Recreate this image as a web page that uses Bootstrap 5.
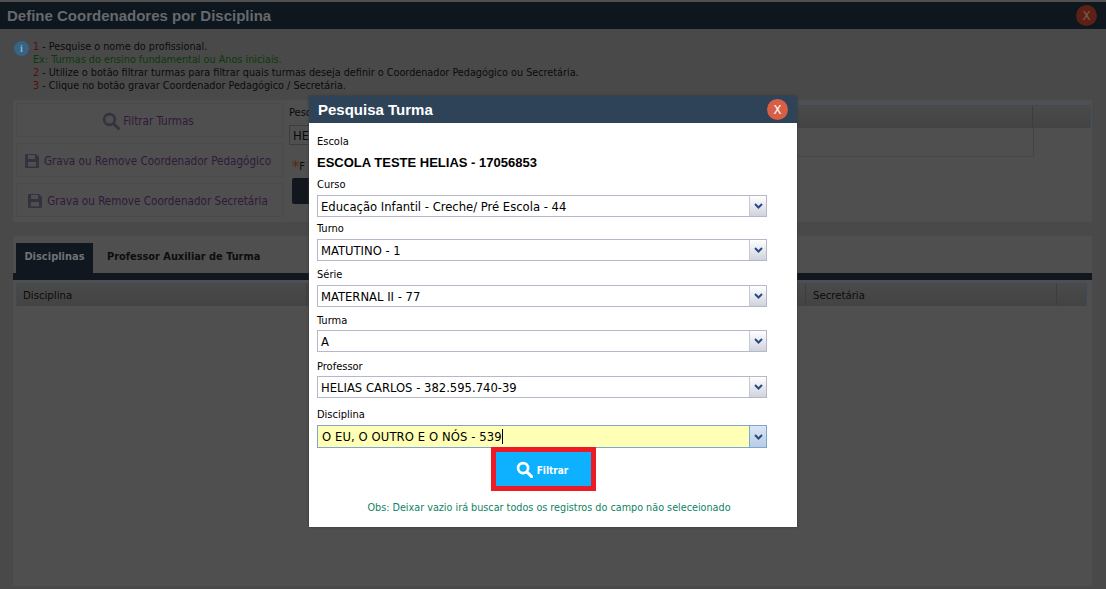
<!DOCTYPE html>
<html lang="pt-BR">
<head>
<meta charset="utf-8">
<title>Define Coordenadores por Disciplina</title>
<link href="https://cdn.jsdelivr.net/npm/bootstrap@5.3.0/dist/css/bootstrap.min.css" rel="stylesheet">
<style>
html,body{height:100%;overflow:hidden}
body{background:#494949;font-family:"DejaVu Sans",sans-serif;font-stretch:condensed;font-size:11px;color:#0b0b0b;position:relative}
.win-top{height:2px;background:#505050}
.win-title{height:27px;background:#0e171e;padding:0 7px;font:bold 15px/28px "Liberation Sans",sans-serif;color:#666a6e}
.close-dim,.close-live{width:21px;height:21px;border-radius:50%;font:13px/21px "DejaVu Sans",sans-serif;font-stretch:condensed;text-align:center}
.close-dim{background:#5c2015;color:#7d5f58;margin-right:2px}
.close-live{background:#d85f47;color:#fff}
.help-box{height:71px;padding:11px 0 0 14px}
.help-ico{width:15px;height:15px;border-radius:50%;background:#376384;color:#8fb0c6;font:bold 10px/15px "Liberation Serif",serif;text-align:center;margin:1px 4px 0 0;flex:none}
.help-text{line-height:13px;font-size:10.75px}
.tx-red{color:#5a0c0c}.tx-green{color:#0c3a0c}
.panel-a,.panel-b{margin:0 14px 0 13px;background:#4f4f4f}
.panel-a{height:122px;padding:3px 1px 3px 3px}
.panel-b{margin-top:14px;height:350px;padding-top:7px}
.act-col{width:267px;flex:none}
.act-btn{height:34px;border:1px solid #4a4a4a;color:#2f1a3a;font-size:11.6px;line-height:16px;padding:1px 3px 0 0;white-space:nowrap;margin-bottom:6px}
.act-btn svg{flex:none;margin-right:5px}
.act-btn .lens-ico{margin-right:3px}
.right-col{width:100px;flex:none;padding:2px 0 0 6px}
.peek-label{line-height:16px}
.peek-input{height:20px;border:1px solid #3d3d3d;padding-left:3px;font-size:13px;line-height:19px;margin-top:4px}
.peek-star{color:#0b0b0b;font-size:11px;line-height:18px;margin:13px 0 0 3px}
.peek-star b{color:#5e270e;font-size:16px;font-weight:normal;vertical-align:-2px}
.peek-btn{height:26px;background:#12171d;border-radius:2px;margin:2px 0 0 3px}
.grid-wrap{flex:1;min-width:0;padding-top:2px}
.grid-head{height:23px;border:1px solid #3c4a59;border-bottom:0;background:linear-gradient(#4a4a4a,#434343)}
.grid-rest{height:29px;margin-right:57px;border-right:1px solid #444;border-bottom:1px solid #484848}
.tab-row{height:30px}
.tab-on{width:77px;margin-left:3px;background:#10171e;color:#6f7376;font-weight:bold;font-size:11px;padding-bottom:2px}
.tab-off{font-weight:bold;font-size:10.9px;margin-left:14px;color:#0d0d0d;padding-bottom:2px}
.tab-line{height:7px;background:#10171e}
.tbl-head{height:23px;margin:3px 5px 0 3px;border:1px solid #3c4a59;border-bottom:0;background:linear-gradient(#4a4a4a,#434343);line-height:23px;font-size:11.3px}
.th-a{width:290px;padding-left:6px;border-right:1px solid #3d3d3d}
.th-b{padding-left:7px;border-left:1px solid #3d3d3d;width:251px}
.th-c{width:30px;border-left:1px solid #3d3d3d}
.th-d{width:58px;border-left:1px solid #3d3d3d}
.pop{position:absolute;left:309px;top:96px;width:488px;height:431px;background:#fff;color:#000;box-shadow:0 0 2px #333}
.pop-head{height:27px;background:#2e4358;padding:0 9px 0 9px}
.pop-title{font:bold 15px/28px "Liberation Sans",sans-serif;color:#fff}
.pop-body{padding:7px 30px 0 8px}
.fld-label{display:block;height:22px;line-height:24px;margin:0;font-size:11px}
.school{font:bold 13px/22px "Liberation Sans",sans-serif;height:20px}
.combo{height:22px;border:1px solid #b5b8c8;font-size:12.9px;line-height:21px}
.combo-val{padding-left:3px;white-space:nowrap}
.combo-btn{width:17px;flex:none;border-left:1px solid #c5c8d8;background:linear-gradient(#fff,#cfd3dc)}
.g2{margin-top:2px}.g2b{margin-top:2px;line-height:26px}.g1{margin-top:1px}.g1b{margin-top:1px;line-height:26px}.g5{margin-top:5px}
.combo-on{height:23px;border-color:#7ea6d4;background:#ffffb5}
.combo-on .combo-val{padding-left:4px;letter-spacing:.1px}
.combo-on .combo-btn{background:linear-gradient(#dbe6f3,#b8cde6);border-left-color:#7ea6d4}
.caret-mark{display:inline-block;width:1px;height:15px;background:#000;vertical-align:-3px}
.filter-frame{width:105px;height:44px;margin:-1px 0 0 174px;border:5px solid #ed1c24;background:#0db1ff}
.filter-btn{height:100%;width:100%;background:#0db1ff;color:#fff;font-weight:bold;font-size:10px;font-stretch:condensed;border:0;border-radius:0;padding:0 3px 0 0}
.filter-btn svg{margin-right:4px}
.filter-btn span{padding-top:2px}
.obs{color:#0f8264;text-align:center;font-size:10.72px;margin-top:9px;line-height:16px;padding-left:14px;white-space:nowrap}
</style>
</head>
<body>
<div class="win-top"></div>
<div class="win-title d-flex justify-content-between align-items-center">
  <span>Define Coordenadores por Disciplina</span>
  <div class="close-dim">X</div>
</div>
<div class="help-box d-flex align-items-start">
  <div class="help-ico">i</div>
  <div class="help-text">
    <div><span class="tx-red">1</span> - Pesquise o nome do profissional.</div>
    <div class="tx-green">Ex: Turmas do ensino fundamental ou Anos iniciais.</div>
    <div><span class="tx-red">2</span> - Utilize o botão filtrar turmas para filtrar quais turmas deseja definir o Coordenador Pedagógico ou Secretária.</div>
    <div><span class="tx-red">3</span> - Clique no botão gravar Coordenador Pedagógico / Secretária.</div>
  </div>
</div>
<div class="panel-a d-flex">
  <div class="act-col">
    <div class="act-btn d-flex align-items-center justify-content-center">
      <svg class="lens-ico" width="18" height="18" viewBox="0 0 18 18" fill="none" stroke="#35323f" stroke-width="2.6"><circle cx="7.5" cy="7.5" r="5.4"/><path d="M11.5 11.5 16.5 16.5" stroke-linecap="round" stroke-width="3"/></svg>
      <span>Filtrar Turmas</span>
    </div>
    <div class="act-btn d-flex align-items-center justify-content-center">
      <svg width="14" height="14" viewBox="0 0 14 14"><path fill="#35323f" d="M1 0h10l3 3v10a1 1 0 0 1-1 1H1a1 1 0 0 1-1-1V1a1 1 0 0 1 1-1z"/><rect x="3" y="1" width="7" height="4" fill="#4f4f4f"/><rect x="3" y="8" width="8" height="4.500" fill="#4f4f4f"/></svg>
      <span>Grava ou Remove Coordenador Pedagógico</span>
    </div>
    <div class="act-btn d-flex align-items-center justify-content-center">
      <svg width="14" height="14" viewBox="0 0 14 14"><path fill="#35323f" d="M1 0h10l3 3v10a1 1 0 0 1-1 1H1a1 1 0 0 1-1-1V1a1 1 0 0 1 1-1z"/><rect x="3" y="1" width="7" height="4" fill="#4f4f4f"/><rect x="3" y="8" width="8" height="4.500" fill="#4f4f4f"/></svg>
      <span>Grava ou Remove Coordenador Secretária</span>
    </div>
  </div>
  <div class="right-col">
    <div class="peek-label">Pesq</div>
    <div class="peek-input">HE</div>
    <div class="peek-star"><b>*</b>F</div>
    <div class="peek-btn"></div>
  </div>
  <div class="grid-wrap">
    <div class="grid-head d-flex justify-content-end"><div class="th-d"></div></div>
    <div class="grid-rest"></div>
  </div>
</div>
<div class="panel-b">
  <div class="tab-row d-flex align-items-center">
    <div class="tab-on h-100 d-flex align-items-center justify-content-center">Disciplinas</div>
    <div class="tab-off">Professor Auxiliar de Turma</div>
  </div>
  <div class="tab-line"></div>
  <div class="tbl-head d-flex">
    <div class="th-a">Disciplina</div>
    <div class="flex-grow-1"></div>
    <div class="th-b">Secretária</div>
    <div class="th-c"></div>
  </div>
</div>

<div class="pop">
  <div class="pop-head d-flex justify-content-between align-items-center">
    <span class="pop-title">Pesquisa Turma</span>
    <div class="close-live">X</div>
  </div>
  <div class="pop-body">
    <label class="fld-label">Escola</label>
    <div class="school">ESCOLA TESTE HELIAS - 17056853</div>
    <label class="fld-label g1">Curso</label>
    <div class="combo d-flex justify-content-between"><div class="combo-val">Educação Infantil - Creche/ Pré Escola - 44</div><div class="combo-btn d-flex align-items-center justify-content-center"><svg width="9" height="6" viewBox="0 0 9 6"><path d="M1 1l3.500 3.500L8 1" fill="none" stroke="#2a4a86" stroke-width="2"/></svg></div></div>
    <label class="fld-label">Turno</label>
    <div class="combo d-flex justify-content-between"><div class="combo-val">MATUTINO - 1</div><div class="combo-btn d-flex align-items-center justify-content-center"><svg width="9" height="6" viewBox="0 0 9 6"><path d="M1 1l3.500 3.500L8 1" fill="none" stroke="#2a4a86" stroke-width="2"/></svg></div></div>
    <label class="fld-label g2">Série</label>
    <div class="combo d-flex justify-content-between"><div class="combo-val">MATERNAL II - 77</div><div class="combo-btn d-flex align-items-center justify-content-center"><svg width="9" height="6" viewBox="0 0 9 6"><path d="M1 1l3.500 3.500L8 1" fill="none" stroke="#2a4a86" stroke-width="2"/></svg></div></div>
    <label class="fld-label g1b">Turma</label>
    <div class="combo d-flex justify-content-between"><div class="combo-val">A</div><div class="combo-btn d-flex align-items-center justify-content-center"><svg width="9" height="6" viewBox="0 0 9 6"><path d="M1 1l3.500 3.500L8 1" fill="none" stroke="#2a4a86" stroke-width="2"/></svg></div></div>
    <label class="fld-label g2b">Professor</label>
    <div class="combo d-flex justify-content-between"><div class="combo-val">HELIAS CARLOS - 382.595.740-39</div><div class="combo-btn d-flex align-items-center justify-content-center"><svg width="9" height="6" viewBox="0 0 9 6"><path d="M1 1l3.500 3.500L8 1" fill="none" stroke="#2a4a86" stroke-width="2"/></svg></div></div>
    <label class="fld-label g5">Disciplina</label>
    <div class="combo combo-on d-flex justify-content-between"><div class="combo-val">O EU, O OUTRO E O NÓS - 539<span class="caret-mark"></span></div><div class="combo-btn d-flex align-items-center justify-content-center"><svg width="9" height="6" viewBox="0 0 9 6"><path d="M1 1l3.500 3.500L8 1" fill="none" stroke="#2a4a86" stroke-width="2"/></svg></div></div>
    <div class="filter-frame">
      <button type="button" class="btn filter-btn d-flex align-items-center justify-content-center">
        <svg width="17" height="17" viewBox="0 0 18 18" fill="none" stroke="#fff" stroke-width="2.8"><circle cx="7.500" cy="7.500" r="5.300"/><path d="M11.500 11.500 16.500 16.500" stroke-linecap="round" stroke-width="3.200"/></svg>
        <span>Filtrar</span>
      </button>
    </div>
    <div class="obs">Obs: Deixar vazio irá buscar todos os registros do campo não seleceionado</div>
  </div>
</div>
<script src="https://cdn.jsdelivr.net/npm/bootstrap@5.3.0/dist/js/bootstrap.bundle.min.js"></script>
</body>
</html>
